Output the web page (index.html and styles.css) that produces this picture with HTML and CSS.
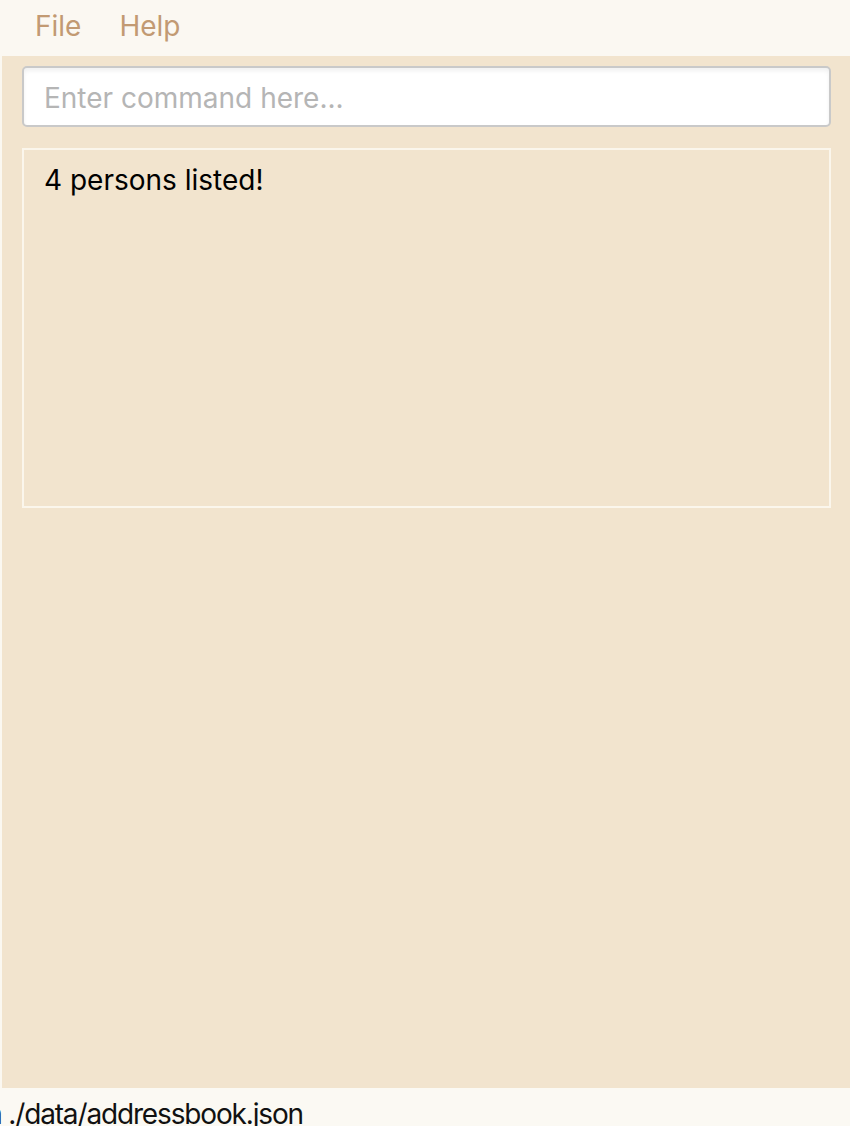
FILE: index.html
```html
<!DOCTYPE html>
<html>
<head>
<meta charset="utf-8">
<link rel="stylesheet" href="styles.css">
</head>
<body>
<div class="app">
  <div class="menubar">
    <span class="menu-item">File</span>
    <span class="menu-item">Help</span>
  </div>
  <div class="main">
    <div class="command-box">
      <input class="command-input" type="text" placeholder="Enter command here...">
    </div>
    <div class="result-box">4 persons listed!</div>
  </div>
  <div class="statusbar"><span class="status-text">a ./data/addressbook.json</span></div>
</div>
</body>
</html>
```
FILE: styles.css
```css
html, body {
  margin: 0;
  padding: 0;
  background: #fbf8f1;
}
body {
  font-family: Inter, "Open Sans", "Liberation Sans", sans-serif;
}
.app {
  width: 850px;
  height: 1126px;
  display: flex;
  flex-direction: column;
  overflow: hidden;
}
.menubar {
  height: 56px;
  background: #fbf8f2;
  display: flex;
  align-items: center;
  gap: 38px;
  padding-left: 35px;
  box-sizing: border-box;
}
.menu-item {
  font-size: 28px;
  color: #c29a73;
  line-height: 1;
  margin-top: -4px;
}
.main {
  margin-left: 2px;
  height: 1032px;
  background: #f2e4ce;
  padding: 10px 19px 0 20px;
  box-sizing: border-box;
  display: flex;
  flex-direction: column;
  gap: 21px;
}
.command-box {
  height: 61px;
  background: #ffffff;
  border: 2px solid #c9c9c9;
  border-radius: 5px;
  box-sizing: border-box;
  box-shadow: inset 0 3px 4px rgba(0,0,0,0.06);
  display: flex;
  align-items: center;
}
.command-input {
  border: none;
  outline: none;
  background: transparent;
  width: 100%;
  font-family: inherit;
  font-size: 28px;
  padding: 3px 0 0 20px;
  color: #000;
}
.command-input::placeholder {
  color: #b5b5b5;
}
.result-box {
  height: 360px;
  border: 2px solid #fbf6ec;
  box-sizing: border-box;
  font-size: 28px;
  color: #000;
  padding: 14px 0 0 20px;
  line-height: 1.2;
}
.statusbar {
  height: 38px;
  background: #fbf9f3;
  overflow: hidden;
  white-space: nowrap;
}
.status-text {
  display: block;
  font-size: 28px;
  letter-spacing: -1.15px;
  color: #111;
  margin-left: -13px;
  line-height: 1;
  padding-top: 12px;
}
```
